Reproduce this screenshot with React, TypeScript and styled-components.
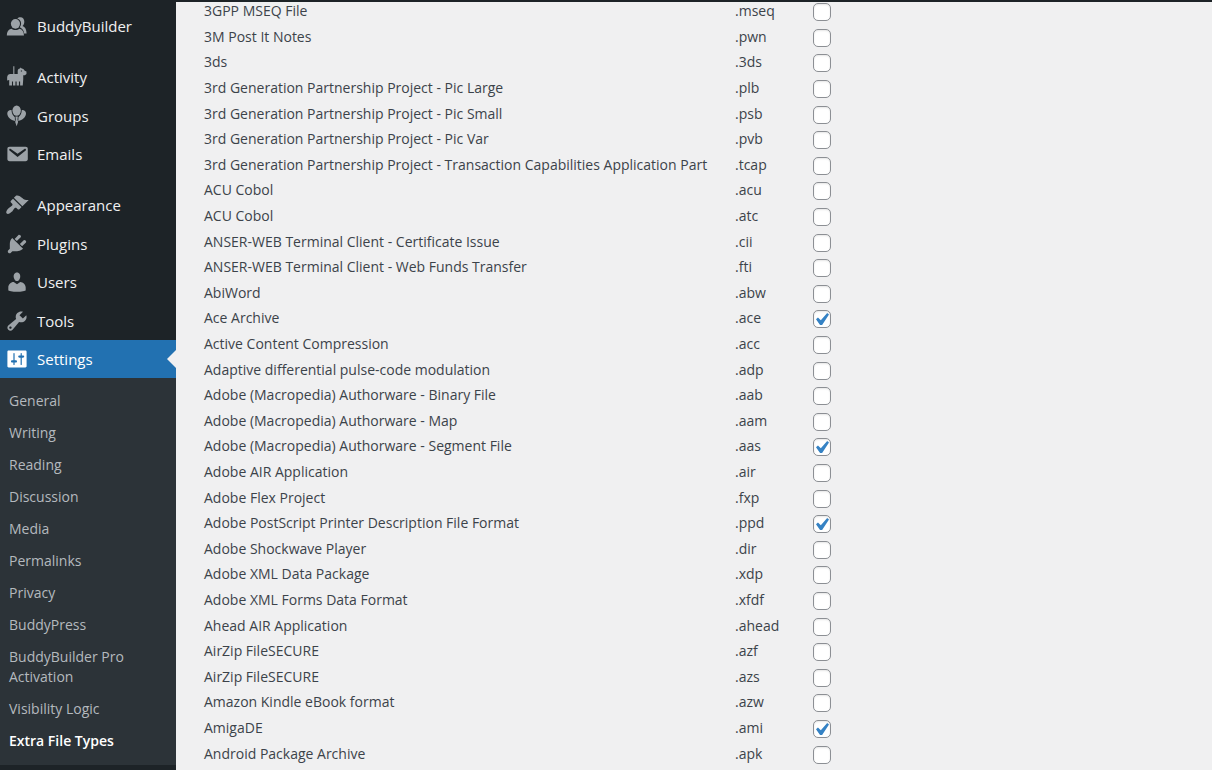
import React from 'react';
import styled, { createGlobalStyle, css } from 'styled-components';

const GlobalStyle = createGlobalStyle`
  *, *::before, *::after { box-sizing: border-box; }
  body {
    margin: 0;
    background: #f0f0f1;
    color: #3c434a;
    font-family: "Open Sans", "Noto Sans", sans-serif;
    font-size: 14px;
  }
`;

const Page = styled.div`
  display: flex;
  flex-direction: column;
  min-height: 100vh;
`;

const AdminBar = styled.header`
  height: 2px;
  background: #1d2327;
`;

const Columns = styled.div`
  display: flex;
  flex: 1;
`;

const Sidebar = styled.nav`
  flex: none;
  width: 176px;
  padding-top: 5px;
  background: #1d2327;
`;

const Menu = styled.ul`
  margin: 0;
  padding: 0;
  list-style: none;
`;

const MenuItem = styled.li`
  height: 38px;
  &:nth-child(even) { height: 39px; }
`;

const Separator = styled.li`
  height: 13px;
`;

const MenuLink = styled.a<{ $current?: boolean }>`
  position: relative;
  display: flex;
  align-items: center;
  gap: 8px;
  height: 100%;
  padding-left: 5px;
  color: #f0f0f1;
  font-size: 15px;
  text-decoration: none;

  svg {
    flex: none;
    width: 24px;
    height: 24px;
    fill: #9ca2a7;
  }

  ${({ $current }) => $current && css`
    background: #2271b1;
    color: #fff;
    svg { fill: #fff; }
    &::after {
      content: "";
      position: absolute;
      right: 0;
      top: 50%;
      border: 9px solid transparent;
      border-right-color: #f0f0f1;
      border-left-width: 0;
      transform: translateY(-50%);
    }
  `}
`;

const Submenu = styled.ul`
  margin: 0;
  padding: 7px 0 8px;
  list-style: none;
  background: #2c3338;
`;

const SubmenuLink = styled.a<{ $current?: boolean }>`
  display: block;
  padding: 6px 40px 6px 9px;
  color: ${({ $current }) => ($current ? '#fff' : '#b4b9be')};
  font-size: 14px;
  font-weight: ${({ $current }) => ($current ? 600 : 400)};
  line-height: 20px;
  text-decoration: none;
`;

const Content = styled.main`
  flex: 1;
  min-width: 0;
  padding-left: 28px;
`;

const FileTable = styled.table`
  width: 636px;
  table-layout: fixed;
  border-collapse: collapse;
`;

const FileRow = styled.tr`
  height: 26px;
  &:nth-child(5n), &:nth-child(5n + 2) { height: 25px; }
`;

const Cell = styled.td<{ $width?: number }>`
  width: ${({ $width }) => ($width ? `${$width}px` : 'auto')};
  padding: 0;
  line-height: 18px;
  text-align: left;
  vertical-align: top;
  white-space: nowrap;
`;

const Checkbox = styled.input`
  appearance: none;
  display: block;
  width: 18px;
  height: 18px;
  margin: 1px 0 0;
  border: 1px solid #8c8f94;
  border-radius: 5px;
  background: #fff;
  box-shadow: inset 0 1px 2px rgba(0, 0, 0, 0.1);

  &:checked::before {
    content: "";
    display: block;
    width: 13px;
    height: 12px;
    margin: 2px 0 0 2px;
    background: #3582c4;
    clip-path: polygon(86% 0, 100% 12%, 47% 100%, 31% 100%, 0 53%, 15% 37%, 37% 60%);
  }
`;

const icons: Record<string, React.ReactNode> = {
  BuddyBuilder: (
    <>
      <path d="M10.300 3.900c.6-.8 1.500-1.200 2.500-1.200 2.100 0 3.300 1.700 3.300 3.700 0 1.500-.6 2.800-1.500 3.600 2.200.7 3.300 2.900 3.400 6.200h-2.100c-.2-2.200-1.200-3.800-2.900-4.700l-.7-.4c.7-.9 1.100-2 1.100-3.300 0-1.900-1.100-3.500-3.100-3.900z" />
      <ellipse cx="8.700" cy="8.200" rx="3.800" ry="4" />
      <path d="M1.500 18c0-3.100 1.300-5.100 3.800-5.700.9.700 2.100 1.100 3.400 1.100s2.500-.4 3.400-1.100c2.400.6 3.700 2.600 3.700 5.700z" />
    </>
  ),
  Activity: (
    <path d="M6.900 1h.9v6.600h2.800V5c0-1.100.7-1.900 1.800-2.100l.6-.9.900.9c1.300.1 2.100.8 2.500 1.900l1.500.6v2.200l-1.300 1h-1.400v3.200l-.4 5.200h-2.200v-3.300h-1V17H9.700v-3.300h-1V17H6.700v-3.300h-.9V17H3.500v-4.500l-1.700.4V9.900c.3-1.400 1.200-2.200 2.600-2.300h2.500zM13.200 4.500v1h1v-1z" fillRule="evenodd" />
  ),
  Groups: (
    <>
      <ellipse cx="9.700" cy="5.500" rx="3.500" ry="4.300" />
      <path d="M8.700 10.400h2l-.3 2.600.5 2-1.200 3.500L8.500 15l.5-2z" />
      <path d="M5.400 5c.1 2.500 1.100 4.700 2.800 6l.1 3.200C4.900 13.500 1.900 11 1.900 8c0-2 1.500-3.200 3.500-3z" />
      <path d="M14 5c-.1 2.500-1.100 4.700-2.800 6l-.1 3.200c3.400-.7 6.400-3.200 6.400-6.200 0-2-1.500-3.200-3.500-3z" />
    </>
  ),
  Emails: (
    <path d="M3.870 4h13.250C18.370 4 19 4.590 19 5.790v8.420c0 1.190-.63 1.790-1.880 1.790H3.870c-1.250 0-1.880-.6-1.880-1.790V5.790c0-1.200.63-1.790 1.880-1.790zm6.620 8.600l6.740-5.530c.24-.2.430-.66.130-1.070-.29-.41-.82-.42-1.170-.17l-5.700 3.860L4.800 5.830c-.35-.25-.88-.24-1.170.17-.3.410-.11.870.13 1.070z" />
  ),
  Appearance: (
    <path d="M14.480 11.060L7.410 3.990l1.500-1.500c.5-.56 2.300-.47 3.510.32 1.210.8 1.430 1.280 2.910 2.100 1.180.64 2.450 1.260 4.450.85zm-.71.71L6.700 4.700 4.930 6.470c-.39.39-.39 1.020 0 1.410l1.060 1.060c.39.39.39 1.030 0 1.420-.6.6-1.430 1.110-2.210 1.690-.35.26-.7.53-1.010.84C1.430 14.230.4 16.080 1.400 17.070c.99 1 2.840-.03 4.180-1.360.31-.31.58-.66.85-1.020.57-.78 1.080-1.610 1.690-2.210.39-.39 1.020-.39 1.410 0l1.060 1.060c.39.39 1.020.39 1.410 0z" />
  ),
  Plugins: (
    <path d="M13.110 4.360L9.870 7.600 8 5.730l3.240-3.240c.35-.34 1.050-.2 1.560.32.520.51.660 1.210.31 1.550zm-8 1.770l.91-1.120 9.010 9.010-1.190.84c-.71.71-2.630 1.160-3.820 1.160H6.140L4.900 17.260c-.59.59-1.540.59-2.120 0-.59-.58-.59-1.530 0-2.120l1.240-1.240v-3.880c0-1.130.4-3.190 1.090-3.890zm7.260 3.970l3.240-3.240c.34-.35 1.040-.21 1.550.31.520.51.660 1.210.31 1.550l-3.240 3.250z" />
  ),
  Users: (
    <path d="M10 9.250c-2.270 0-2.730-3.440-2.730-3.440C7 4.020 7.820 2 9.970 2c2.160 0 2.980 2.020 2.710 3.810 0 0-.41 3.440-2.680 3.440zm0 2.570L12.720 10c2.390 0 4.520 2.330 4.520 4.530v2.490s-3.650 1.130-7.240 1.130c-3.650 0-7.240-1.130-7.240-1.130v-2.490c0-2.250 1.940-4.480 4.470-4.480z" />
  ),
  Tools: (
    <path d="M16.680 9.770c-1.340 1.340-3.300 1.670-4.950.99l-5.410 6.520c-.99.99-2.590.99-3.580 0s-.99-2.590 0-3.570l6.520-5.420c-.68-1.650-.35-3.610.99-4.950 1.280-1.280 3.120-1.620 4.720-1.060l-2.890 2.890 2.820 2.820 2.860-2.870c.53 1.580.18 3.390-1.080 4.650zM3.810 16.210c.4.39 1.040.39 1.430 0 .4-.4.4-1.040 0-1.430-.39-.4-1.030-.4-1.430 0-.39.39-.39 1.030 0 1.430z" />
  ),
  Settings: (
    <path d="M18 16V4c0-.55-.45-1-1-1H3c-.55 0-1 .45-1 1v12c0 .55.45 1 1 1h14c.55 0 1-.45 1-1zM8 11h1c.55 0 1 .45 1 1s-.45 1-1 1H8v1.500c0 .28-.22.5-.5.5s-.5-.22-.5-.5V13H6c-.55 0-1-.45-1-1s.45-1 1-1h1V5.500c0-.28.22-.5.5-.5s.5.22.5.5V11zm5-2h-1c-.55 0-1-.45-1-1s.45-1 1-1h1V5.500c0-.28.22-.5.5-.5s.5.22.5.5V7h1c.55 0 1 .45 1 1s-.45 1-1 1h-1v5.500c0 .28-.22.5-.5.5s-.5-.22-.5-.5V9z" />
  ),
};

const menu: (string | null)[] = [
  'BuddyBuilder', null, 'Activity', 'Groups', 'Emails', null,
  'Appearance', 'Plugins', 'Users', 'Tools', 'Settings',
];

const submenu = [
  'General', 'Writing', 'Reading', 'Discussion', 'Media', 'Permalinks', 'Privacy',
  'BuddyPress', 'BuddyBuilder Pro Activation', 'Visibility Logic', 'Extra File Types',
];

const files: [string, string, boolean?][] = [
  ['3GPP MSEQ File', '.mseq'],
  ['3M Post It Notes', '.pwn'],
  ['3ds', '.3ds'],
  ['3rd Generation Partnership Project - Pic Large', '.plb'],
  ['3rd Generation Partnership Project - Pic Small', '.psb'],
  ['3rd Generation Partnership Project - Pic Var', '.pvb'],
  ['3rd Generation Partnership Project - Transaction Capabilities Application Part', '.tcap'],
  ['ACU Cobol', '.acu'],
  ['ACU Cobol', '.atc'],
  ['ANSER-WEB Terminal Client - Certificate Issue', '.cii'],
  ['ANSER-WEB Terminal Client - Web Funds Transfer', '.fti'],
  ['AbiWord', '.abw'],
  ['Ace Archive', '.ace', true],
  ['Active Content Compression', '.acc'],
  ['Adaptive differential pulse-code modulation', '.adp'],
  ['Adobe (Macropedia) Authorware - Binary File', '.aab'],
  ['Adobe (Macropedia) Authorware - Map', '.aam'],
  ['Adobe (Macropedia) Authorware - Segment File', '.aas', true],
  ['Adobe AIR Application', '.air'],
  ['Adobe Flex Project', '.fxp'],
  ['Adobe PostScript Printer Description File Format', '.ppd', true],
  ['Adobe Shockwave Player', '.dir'],
  ['Adobe XML Data Package', '.xdp'],
  ['Adobe XML Forms Data Format', '.xfdf'],
  ['Ahead AIR Application', '.ahead'],
  ['AirZip FileSECURE', '.azf'],
  ['AirZip FileSECURE', '.azs'],
  ['Amazon Kindle eBook format', '.azw'],
  ['AmigaDE', '.ami', true],
  ['Android Package Archive', '.apk'],
];

export default function App() {
  return (
    <Page>
      <GlobalStyle />
      <AdminBar />
      <Columns>
        <Sidebar aria-label="Main menu">
          <Menu>
            {menu.map((name, i) =>
              name === null ? (
                <Separator key={i} role="presentation" />
              ) : (
                <MenuItem key={name}>
                  <MenuLink href="#" $current={name === 'Settings'}>
                    <svg viewBox="0 0 20 20" aria-hidden="true">{icons[name]}</svg>
                    {name}
                  </MenuLink>
                </MenuItem>
              ),
            )}
          </Menu>
          <Submenu>
            {submenu.map((name) => (
              <li key={name}>
                <SubmenuLink href="#" $current={name === 'Extra File Types'}>{name}</SubmenuLink>
              </li>
            ))}
          </Submenu>
        </Sidebar>
        <Content>
          <FileTable>
            <tbody>
              {files.map(([name, ext, checked]) => (
                <FileRow key={ext}>
                  <Cell $width={531}><label htmlFor={ext.slice(1)}>{name}</label></Cell>
                  <Cell $width={78}>{ext}</Cell>
                  <Cell><Checkbox type="checkbox" id={ext.slice(1)} defaultChecked={checked} /></Cell>
                </FileRow>
              ))}
            </tbody>
          </FileTable>
        </Content>
      </Columns>
    </Page>
  );
}
